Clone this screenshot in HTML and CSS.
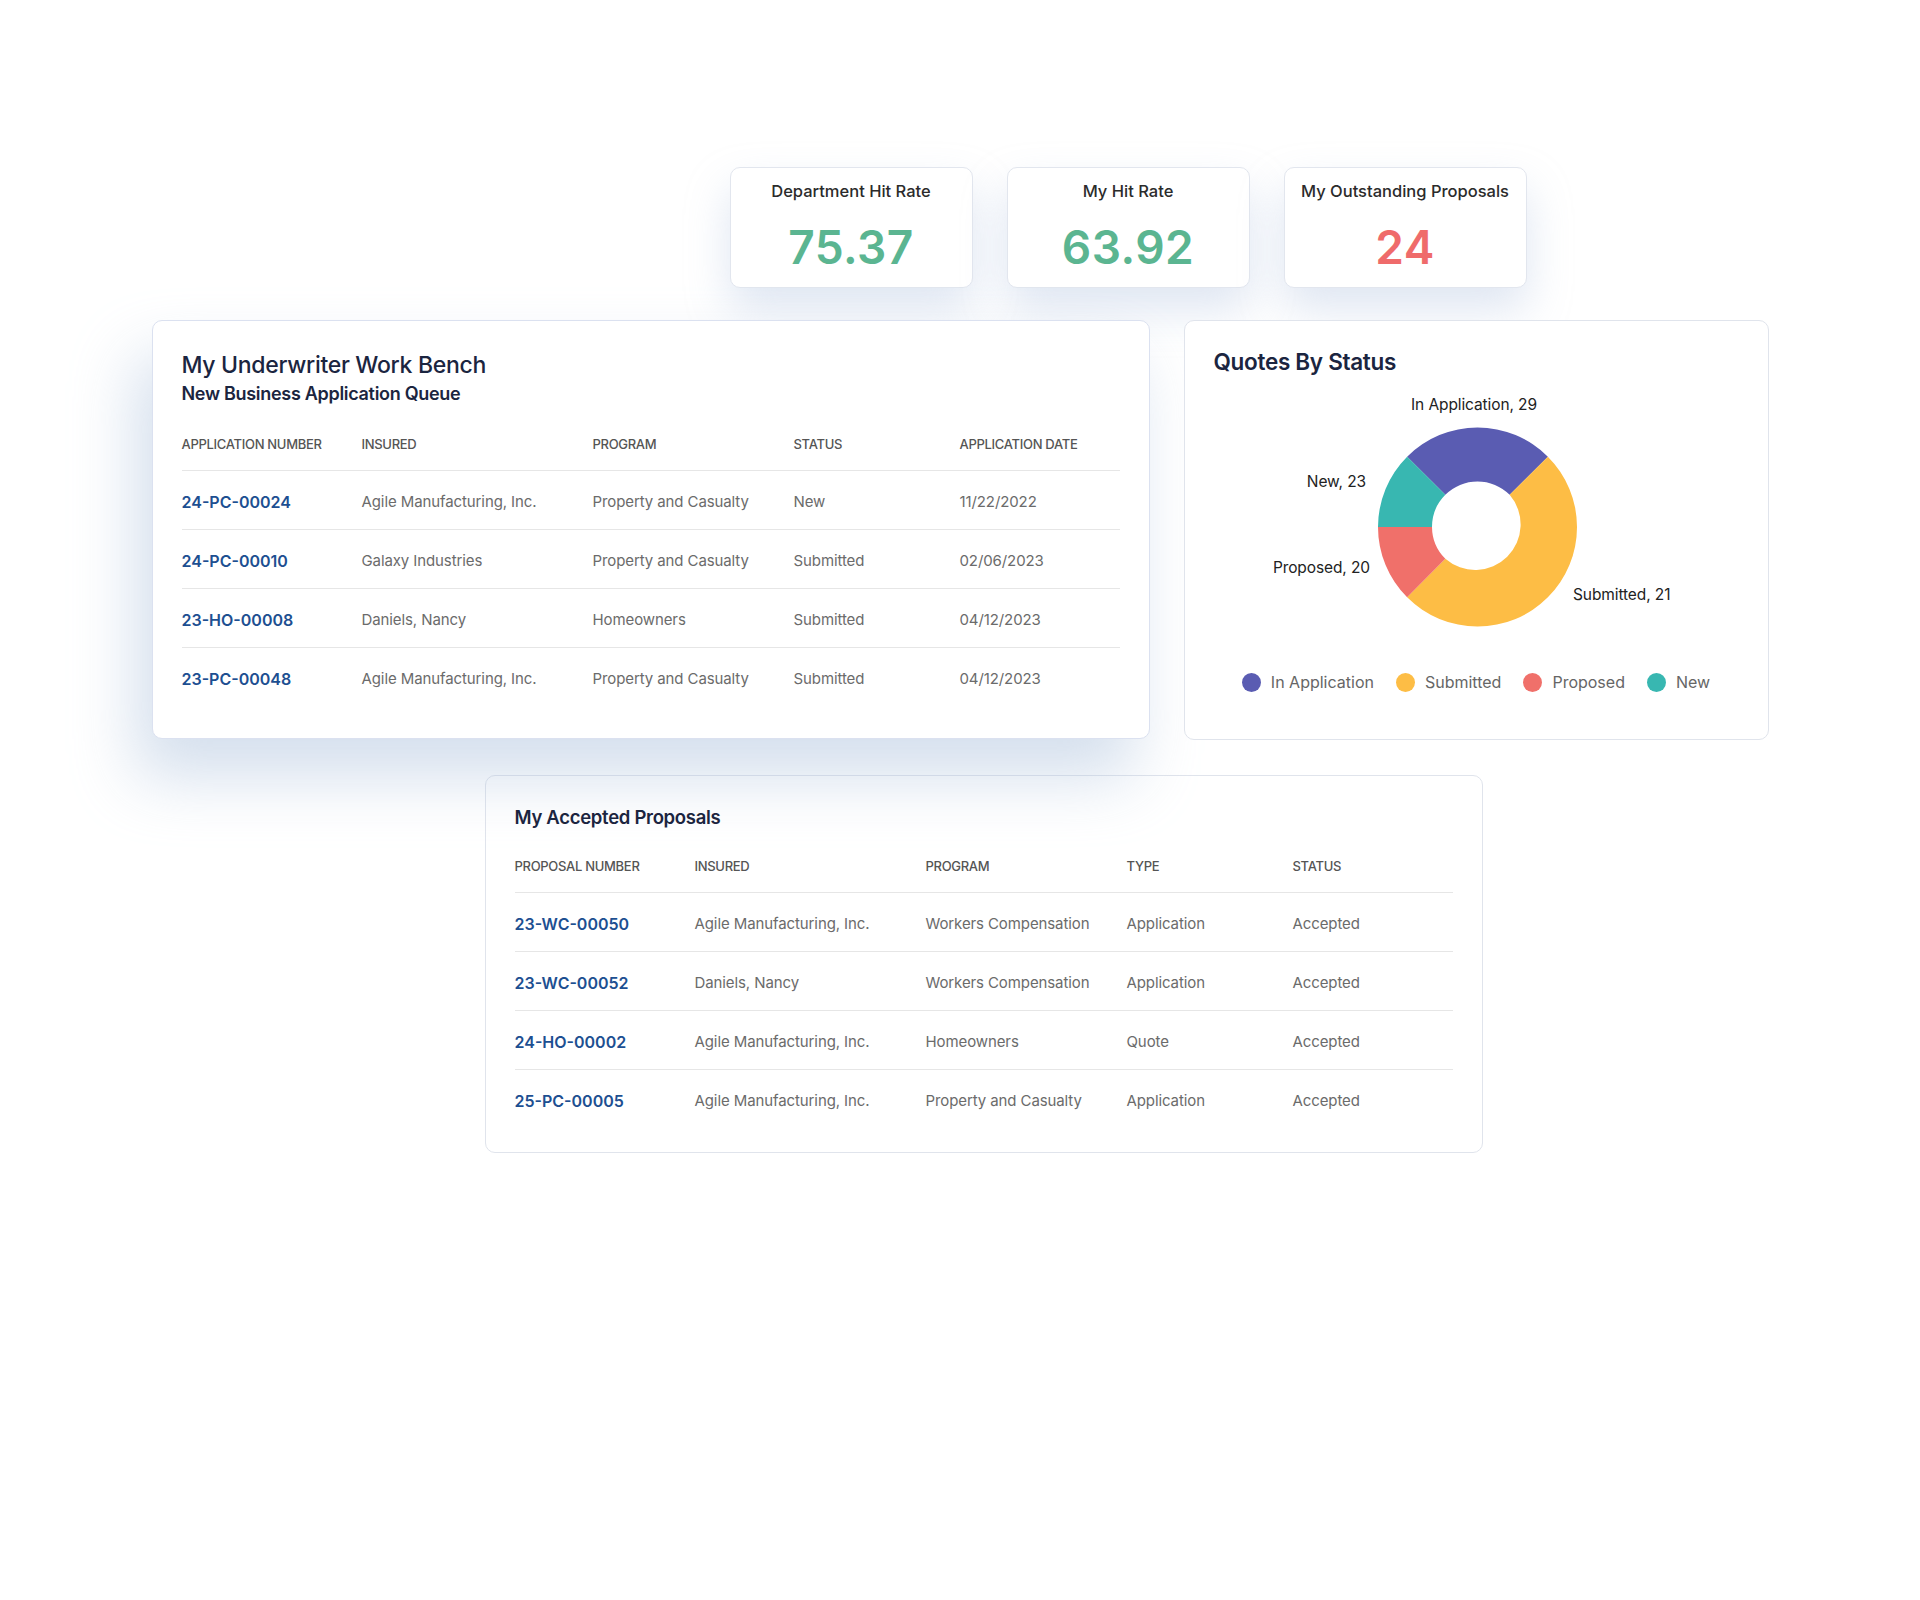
FILE: index.html
```html
<!DOCTYPE html>
<html lang="en">
<head>
  <meta charset="UTF-8" />
  <title>Underwriter Dashboard</title>
  <link rel="stylesheet" href="styles.css">
</head>
<body>
  <div class="board">
    <div class="stats">
      <div class="stat">
        <div class="stat-title">Department Hit Rate</div>
        <div class="stat-value green">75.37</div>
      </div>
      <div class="stat">
        <div class="stat-title">My Hit Rate</div>
        <div class="stat-value green">63.92</div>
      </div>
      <div class="stat">
        <div class="stat-title">My Outstanding Proposals</div>
        <div class="stat-value red">24</div>
      </div>
    </div>

    <div class="row">
      <div class="card bench">
        <h2>My Underwriter Work Bench</h2>
        <h3>New Business Application Queue</h3>
        <table>
          <thead>
            <tr>
              <th class="c1">Application Number</th>
              <th class="c2">Insured</th>
              <th class="c3">Program</th>
              <th class="c4">Status</th>
              <th>Application Date</th>
            </tr>
          </thead>
          <tbody>
            <tr>
              <td><a href="#">24-PC-00024</a></td>
              <td>Agile Manufacturing, Inc.</td>
              <td>Property and Casualty</td>
              <td>New</td>
              <td>11/22/2022</td>
            </tr>
            <tr>
              <td><a href="#">24-PC-00010</a></td>
              <td>Galaxy Industries</td>
              <td>Property and Casualty</td>
              <td>Submitted</td>
              <td>02/06/2023</td>
            </tr>
            <tr>
              <td><a href="#">23-HO-00008</a></td>
              <td>Daniels, Nancy</td>
              <td>Homeowners</td>
              <td>Submitted</td>
              <td>04/12/2023</td>
            </tr>
            <tr>
              <td><a href="#">23-PC-00048</a></td>
              <td>Agile Manufacturing, Inc.</td>
              <td>Property and Casualty</td>
              <td>Submitted</td>
              <td>04/12/2023</td>
            </tr>
          </tbody>
        </table>
      </div>

      <div class="card quotes">
        <h2>Quotes By Status</h2>
        <svg class="donut" width="585" height="250" viewBox="0 0 585 250">
          <path fill="#5a5cb2" d="M222.14 69.64 A99.5 99.5 0 0 1 362.86 69.64 L324.67 107.83 A45.5 45.5 0 0 0 260.33 107.83 Z" />
          <path fill="#fdbd45" d="M362.86 69.64 A99.5 99.5 0 0 1 222.14 210.36 L260.33 171.83 A45.5 45.5 0 0 0 324.67 107.83 Z" />
          <path fill="#f0706a" d="M222.14 210.36 A99.5 99.5 0 0 1 193 140 L247 140 A45.5 45.5 0 0 0 260.33 171.83 Z" />
          <path fill="#38b7b1" d="M193 140 A99.5 99.5 0 0 1 222.14 69.64 L260.33 107.83 A45.5 45.5 0 0 0 247 140 Z" />
          <text class="lbl" x="289" y="22.5" text-anchor="middle">In Application, 29</text>
          <text class="lbl" x="181" y="99.5" text-anchor="end">New, 23</text>
          <text class="lbl" x="185" y="185.5" text-anchor="end">Proposed, 20</text>
          <text class="lbl" x="388" y="212.5">Submitted, 21</text>
        </svg>
        <div class="legend">
          <span class="item"><i class="dot purple"></i>In Application</span>
          <span class="item"><i class="dot yellow"></i>Submitted</span>
          <span class="item"><i class="dot coral"></i>Proposed</span>
          <span class="item"><i class="dot teal"></i>New</span>
        </div>
      </div>
    </div>

    <div class="card accepted">
      <h2>My Accepted Proposals</h2>
      <table>
        <thead>
          <tr>
            <th class="c1">Proposal Number</th>
            <th class="c2">Insured</th>
            <th class="c3">Program</th>
            <th class="c4">Type</th>
            <th>Status</th>
          </tr>
        </thead>
        <tbody>
          <tr>
            <td><a href="#">23-WC-00050</a></td>
            <td>Agile Manufacturing, Inc.</td>
            <td>Workers Compensation</td>
            <td>Application</td>
            <td>Accepted</td>
          </tr>
          <tr>
            <td><a href="#">23-WC-00052</a></td>
            <td>Daniels, Nancy</td>
            <td>Workers Compensation</td>
            <td>Application</td>
            <td>Accepted</td>
          </tr>
          <tr>
            <td><a href="#">24-HO-00002</a></td>
            <td>Agile Manufacturing, Inc.</td>
            <td>Homeowners</td>
            <td>Quote</td>
            <td>Accepted</td>
          </tr>
          <tr>
            <td><a href="#">25-PC-00005</a></td>
            <td>Agile Manufacturing, Inc.</td>
            <td>Property and Casualty</td>
            <td>Application</td>
            <td>Accepted</td>
          </tr>
        </tbody>
      </table>
    </div>
  </div>
</body>
</html>
```

FILE: styles.css
```css
* { box-sizing: border-box; }
html, body {
  margin: 0;
  padding: 0;
  background: #fff;
  font-family: Inter, "Open Sans", sans-serif;
  color: #1b2540;
}
.board {
  width: 1617px;
  margin: 0 auto;
  padding-top: 167px;
}
.stats {
  display: flex;
  gap: 34px;
  padding-left: 578px;
}
.stat {
  width: 243px;
  height: 121px;
  background: #fff;
  border: 1px solid #e2e6ee;
  border-radius: 10px;
  box-shadow: 0 22px 44px rgba(170, 190, 220, 0.38);
  text-align: center;
  padding-top: 12px;
}
.stat-title {
  font-size: 16.5px;
  line-height: 22px;
  font-weight: 500;
  color: #2b2b2b;
}
.stat-value {
  margin-top: 17px;
  font-size: 46px;
  line-height: 56px;
  font-weight: 600;
  letter-spacing: 0.5px;
}
.green { color: #5bb591; }
.red { color: #ef6b6b; }
.row {
  display: flex;
  gap: 34px;
  margin-top: 32px;
  align-items: flex-start;
}
.card {
  background: #fff;
  border: 1px solid #e0e4ec;
  border-radius: 10px;
}
.bench {
  width: 998px;
  height: 419px;
  padding: 29px 29px 34px;
  border-color: #dbe1f0;
  box-shadow: -16px 38px 64px rgba(165, 188, 218, 0.48);
}
.quotes {
  width: 585px;
  height: 420px;
  padding: 26px 29px 0;
}
.accepted {
  width: 998px;
  height: 378px;
  margin-top: 35px;
  margin-left: 333px;
  padding: 28px 29px 0;
}
h2 {
  margin: 0;
  font-size: 23px;
  line-height: 30px;
  font-weight: 500;
  letter-spacing: -0.3px;
  color: #1b2540;
}
.quotes h2 {
  font-size: 22.5px;
  font-weight: 600;
}
.accepted h2 {
  font-size: 18.5px;
  line-height: 26px;
  font-weight: 600;
}
h3 {
  margin: 2px 0 0;
  font-size: 18px;
  line-height: 24px;
  font-weight: 600;
  letter-spacing: -0.3px;
  color: #1b2540;
}
table {
  width: 100%;
  border-collapse: collapse;
  table-layout: fixed;
  margin-top: 14px;
}
.accepted table { margin-top: 12px; }
th {
  text-align: left;
  font-size: 13px;
  line-height: 16px;
  font-weight: 500;
  text-transform: uppercase;
  color: #555;
  letter-spacing: -0.3px;
  padding: 16px 0 18px;
  border-bottom: 1px solid #e6e6e6;
}
.c1 { width: 180px; }
.c2 { width: 231px; }
.c3 { width: 201px; }
.c4 { width: 166px; }
td {
  font-size: 15px;
  line-height: 16px;
  color: #6b6b6b;
  padding: 23px 0 19px;
  white-space: nowrap;
  letter-spacing: -0.1px;
  border-bottom: 1px solid #e6e6e6;
}
tbody tr:last-child td { border-bottom: none; }
td a {
  display: block;
  font-size: 16px;
  line-height: 16px;
  color: #1d4f91;
  font-weight: 600;
  text-decoration: none;
  letter-spacing: 0;
}
.donut {
  display: block;
  margin: 10px -29px 0;
}
.lbl {
  font-family: Inter, "Open Sans", sans-serif;
  font-size: 15.5px;
  fill: #222;
  letter-spacing: -0.1px;
}
.legend {
  display: flex;
  justify-content: center;
  gap: 22px;
  margin-top: 35px;
}
.item {
  display: flex;
  align-items: center;
  gap: 10px;
  font-size: 16px;
  line-height: 20px;
  color: #666;
}
.dot {
  width: 19px;
  height: 19px;
  border-radius: 50%;
}
.purple { background: #5a5cb2; }
.yellow { background: #fdbd45; }
.coral { background: #f0706a; }
.teal { background: #38b7b1; }
```
